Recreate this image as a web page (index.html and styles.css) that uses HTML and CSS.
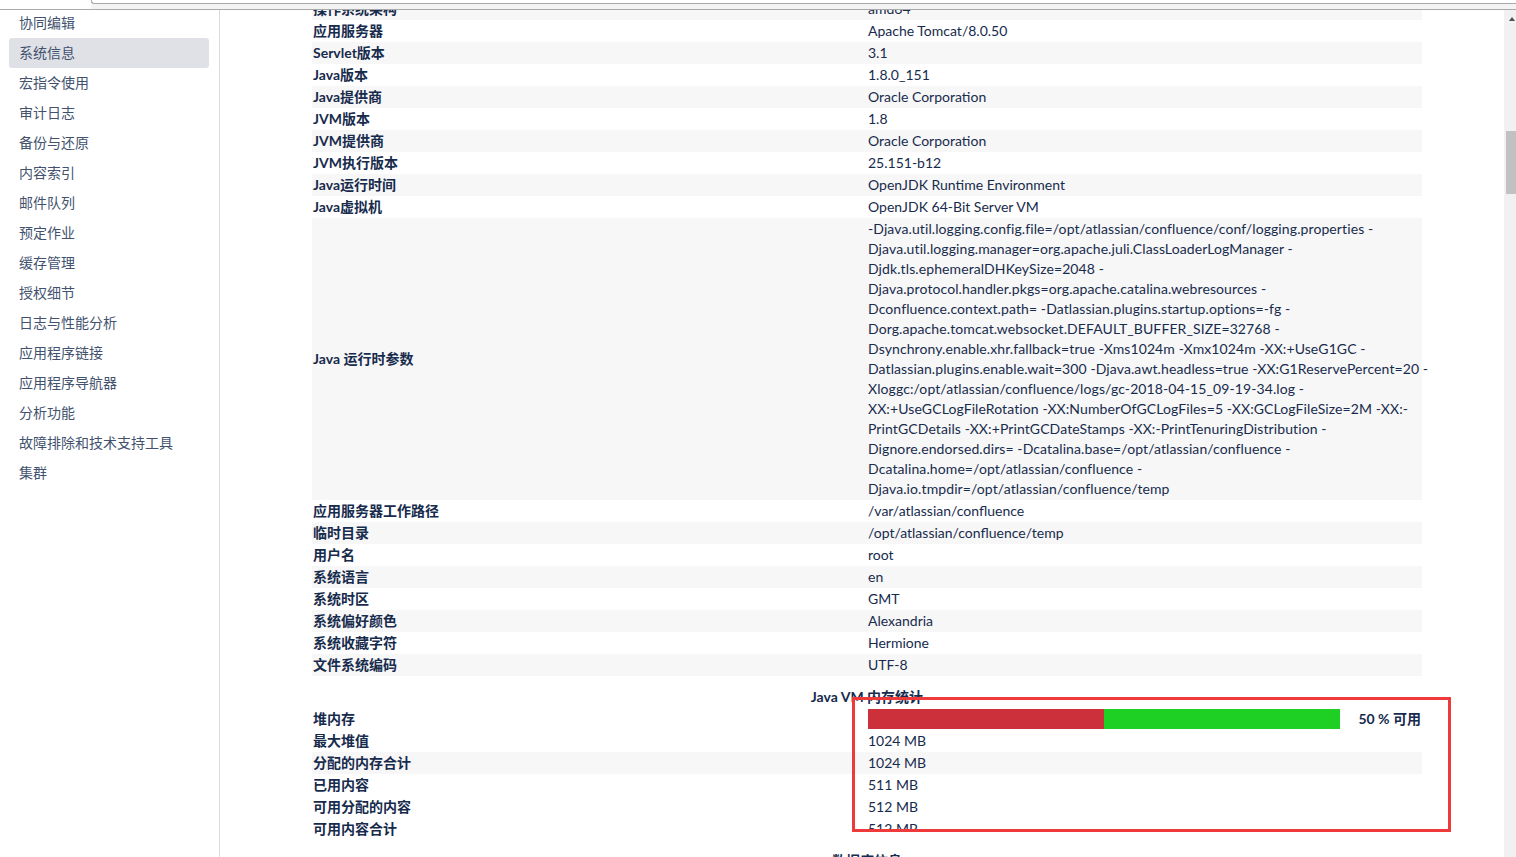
FILE: index.html
```html
<!DOCTYPE html>
<html>

<head>
    <meta http-equiv="Content-Type" content="text/html; charset=utf-8" />
    <title>系统信息 - Confluence</title>
    <link rel="stylesheet" href="styles.css">
</head>

<body>
    <div class="chrome">
        <div class="address"></div>
    </div>

    <div class="page">
        <nav class="sidebar">
            <ul class="menu">
                <li>协同编辑</li>
                <li class="active">系统信息</li>
                <li>宏指令使用</li>
                <li>审计日志</li>
                <li>备份与还原</li>
                <li>内容索引</li>
                <li>邮件队列</li>
                <li>预定作业</li>
                <li>缓存管理</li>
                <li>授权细节</li>
                <li>日志与性能分析</li>
                <li>应用程序链接</li>
                <li>应用程序导航器</li>
                <li>分析功能</li>
                <li>故障排除和技术支持工具</li>
                <li>集群</li>
            </ul>
        </nav>

        <main class="content">
            <table class="info scrolled">
                <tr><th>操作系统架构</th><td>amd64</td></tr>
                <tr><th>应用服务器</th><td>Apache Tomcat/8.0.50</td></tr>
                <tr><th>Servlet版本</th><td>3.1</td></tr>
                <tr><th>Java版本</th><td>1.8.0_151</td></tr>
                <tr><th>Java提供商</th><td>Oracle Corporation</td></tr>
                <tr><th>JVM版本</th><td>1.8</td></tr>
                <tr><th>JVM提供商</th><td>Oracle Corporation</td></tr>
                <tr><th>JVM执行版本</th><td>25.151-b12</td></tr>
                <tr><th>Java运行时间</th><td>OpenJDK Runtime Environment</td></tr>
                <tr><th>Java虚拟机</th><td>OpenJDK 64-Bit Server VM</td></tr>
                <tr>
                    <th class="middle">Java 运行时参数</th>
                    <td class="args">-Djava.util.logging.config.file=/opt/atlassian/confluence/conf/logging.properties -<br>Djava.util.logging.manager=org.apache.juli.ClassLoaderLogManager -<br>Djdk.tls.ephemeralDHKeySize=2048 -<br>Djava.protocol.handler.pkgs=org.apache.catalina.webresources -<br>Dconfluence.context.path= -Datlassian.plugins.startup.options=-fg -<br>Dorg.apache.tomcat.websocket.DEFAULT_BUFFER_SIZE=32768 -<br>Dsynchrony.enable.xhr.fallback=true -Xms1024m -Xmx1024m -XX:+UseG1GC -<br>Datlassian.plugins.enable.wait=300 -Djava.awt.headless=true -XX:G1ReservePercent=20 -<br>Xloggc:/opt/atlassian/confluence/logs/gc-2018-04-15_09-19-34.log -<br>XX:+UseGCLogFileRotation -XX:NumberOfGCLogFiles=5 -XX:GCLogFileSize=2M -XX:-<br>PrintGCDetails -XX:+PrintGCDateStamps -XX:-PrintTenuringDistribution -<br>Dignore.endorsed.dirs= -Dcatalina.base=/opt/atlassian/confluence -<br>Dcatalina.home=/opt/atlassian/confluence -<br>Djava.io.tmpdir=/opt/atlassian/confluence/temp</td>
                </tr>
                <tr><th>应用服务器工作路径</th><td>/var/atlassian/confluence</td></tr>
                <tr><th>临时目录</th><td>/opt/atlassian/confluence/temp</td></tr>
                <tr><th>用户名</th><td>root</td></tr>
                <tr><th>系统语言</th><td>en</td></tr>
                <tr><th>系统时区</th><td>GMT</td></tr>
                <tr><th>系统偏好颜色</th><td>Alexandria</td></tr>
                <tr><th>系统收藏字符</th><td>Hermione</td></tr>
                <tr><th>文件系统编码</th><td>UTF-8</td></tr>
            </table>

            <div class="section">
                <table class="info memory">
                    <caption>Java VM 内存统计</caption>
                    <tr>
                        <th>堆内存</th>
                        <td>
                            <div class="usage">
                                <div class="bar">
                                    <div class="used" style="width: 50%"></div>
                                    <div class="free" style="width: 50%"></div>
                                </div>
                                <b class="percent">50 % 可用</b>
                            </div>
                        </td>
                    </tr>
                    <tr><th>最大堆值</th><td>1024 MB</td></tr>
                    <tr class="zebra"><th>分配的内存合计</th><td>1024 MB</td></tr>
                    <tr><th>已用内容</th><td>511 MB</td></tr>
                    <tr><th>可用分配的内容</th><td>512 MB</td></tr>
                    <tr><th>可用内容合计</th><td>512 MB</td></tr>
                </table>
                <div class="mark"></div>
            </div>

            <h3 class="section-title">数据库信息</h3>
        </main>

        <div class="scrollbar">
            <div class="arrow"></div>
            <div class="thumb"></div>
        </div>
    </div>
</body>

</html>
```

FILE: styles.css
```css
html, body {
    margin: 0;
    height: 100%;
    overflow: hidden;
}

body {
    font-family: Lato, "Noto Sans CJK SC", sans-serif;
    font-size: 14px;
    color: #172b4d;
    background: #fff;
}

/* browser strip at the very top */
.chrome {
    position: absolute;
    top: 0;
    left: 0;
    right: 0;
    height: 9px;
    background: #f3f3f3;
    border-bottom: 1px solid #a9a9a9;
    z-index: 5;
}
.chrome .address {
    margin-left: 91px;
    height: 3px;
    background: #fff;
    border-left: 1px solid #a9a9a9;
    border-bottom: 1px solid #a9a9a9;
    border-bottom-left-radius: 3px;
}
.chrome::before {
    content: "";
    position: absolute;
    left: 0;
    top: 0;
    width: 91px;
    height: 9px;
    background: #fff;
}

.page {
    display: flex;
    height: 857px;
}

/* left navigation */
.sidebar {
    width: 219px;
    flex-shrink: 0;
    border-right: 1px solid #dcdcdc;
    padding-top: 8px;
}
.menu {
    list-style: none;
    margin: 0;
    padding: 0;
}
.menu li {
    margin-left: 9px;
    width: 200px;
    height: 30px;
    line-height: 30px;
    padding-left: 10px;
    box-sizing: border-box;
    border-radius: 3px;
    color: #42526e;
    white-space: nowrap;
}
.menu li.active {
    background: #dfe1e6;
}

/* main tables */
.content {
    flex: 1;
    padding-left: 92px;
    overflow: hidden;
}

.info {
    width: 1110px;
    table-layout: fixed;
    border-collapse: collapse;
    margin-top: 10px;
}
.info.scrolled {
    margin-top: -2px;
}
.info caption,
.section-title {
    font-weight: bold;
    font-size: 14px;
    line-height: 20px;
    padding: 1px 0;
    text-align: center;
}
.section-title {
    width: 1110px;
    margin: 10px 0 0;
}
.info th,
.info td {
    padding: 1px;
    line-height: 20px;
    text-align: left;
    vertical-align: top;
}
.info th {
    width: 553px;
    font-weight: bold;
}
.info th.middle {
    vertical-align: middle;
}
.info td.args {
    white-space: nowrap;
    letter-spacing: 0.1px;
}
.info.scrolled tr:nth-child(odd),
.info tr.zebra {
    background: #f7f7f7;
}

/* heap usage bar */
.usage {
    display: flex;
    align-items: center;
}
.usage .bar {
    flex: 1;
    height: 20px;
    display: flex;
}
.usage .used {
    background: #cb303b;
}
.usage .free {
    background: #1ecf24;
}
.usage .percent {
    margin-left: 18px;
    white-space: nowrap;
}

/* red annotation box drawn over the memory table */
.section {
    position: relative;
}
.mark {
    position: absolute;
    left: 540px;
    top: 11px;
    width: 599px;
    height: 135px;
    box-sizing: border-box;
    border: 3px solid #ee3a3a;
}
.mark::after {
    content: "";
    position: absolute;
    left: -3px;
    right: -3px;
    top: 100%;
    margin-top: 3px;
    height: 6px;
    background: #fff;
}

/* fake window scrollbar */
.scrollbar {
    width: 12px;
    flex-shrink: 0;
    background: #f1f1f1;
    padding-top: 17px;
    box-sizing: border-box;
}
.scrollbar .arrow {
    width: 0;
    height: 0;
    margin-left: 5px;
    border-left: 3px solid transparent;
    border-right: 3px solid transparent;
    border-bottom: 4px solid #505050;
}
.scrollbar .thumb {
    margin-top: 110px;
    margin-left: 2px;
    width: 10px;
    height: 63px;
    background: #c1c1c1;
}
```
